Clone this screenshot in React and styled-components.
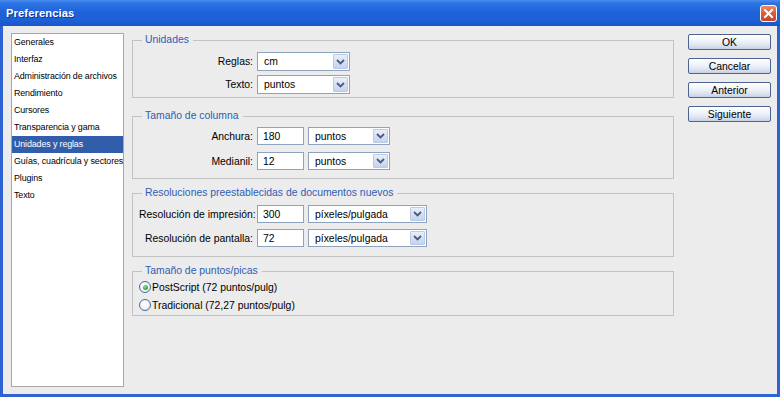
import React from 'react';
import styled, { createGlobalStyle } from 'styled-components';

const Global = createGlobalStyle`
  html, body { margin: 0; padding: 0; background: #ECECEC; }
  body { font-family: "Liberation Sans", Arial, sans-serif; color: #000; }
  * { box-sizing: border-box; }
`;

const Window = styled.div`
  width: 780px;
  height: 397px;
  display: flex;
  flex-direction: column;
  overflow: hidden;
`;

const TitleBar = styled.div`
  height: 26px;
  flex: none;
  display: flex;
  align-items: center;
  justify-content: space-between;
  padding: 0 3px 0 6px;
  background: linear-gradient(180deg, #4A8EF2 0%, #2D74E4 12%, #1F63D9 45%, #1D5FD6 80%, #1A55C6 100%);
`;

const Title = styled.span`
  font-family: "Liberation Sans", Arial, sans-serif;
  font-weight: bold;
  font-size: 11.2px;
  color: #fff;
  text-shadow: 1px 1px 0 #0C3A9A;
  letter-spacing: 0.1px;
`;

const CloseButton = styled.div`
  width: 17px;
  height: 17px;
  border: 1px solid #fff;
  border-radius: 3px;
  background: linear-gradient(180deg, #EE8A67 0%, #DF5F38 45%, #C9431F 100%);
  display: flex;
  align-items: center;
  justify-content: center;
`;

const Frame = styled.div`
  flex: 1;
  display: flex;
  align-items: stretch;
  background: #ECECEC;
  border: 3px solid #2F63D4;
  border-top: 0;
  padding: 7px 0 7px 8px;
`;

const Sidebar = styled.ul`
  list-style: none;
  margin: 0;
  padding: 0;
  width: 113px;
  flex: none;
  background: #fff;
  border: 1px solid #A8A8A8;
`;

const SideItem = styled.li`
  height: 17px;
  line-height: 17px;
  padding-left: 2px;
  font-size: 8.9px;
  letter-spacing: -0.12px;
  white-space: nowrap;
  color: ${p => (p.$active ? '#fff' : '#000')};
  background: ${p => (p.$active ? '#315DAA' : 'transparent')};
`;

const Main = styled.div`
  width: 542px;
  margin-left: 8px;
  padding-top: 1px;
  display: flex;
  flex-direction: column;
  gap: 8px;
  flex: none;
`;

const Group = styled.fieldset`
  margin: 0 0 ${p => p.$mb || 0}px 0;
  border: 1px solid #C2C2C2;
  padding: ${p => p.$pt}px 6px ${p => p.$pb}px 6px;
  display: flex;
  flex-direction: column;
  gap: ${p => p.$gap}px;
  min-inline-size: 0;
`;

const Legend = styled.legend`
  margin-left: 3px;
  padding: 0 4px 0 3px;
  line-height: 12px;
  font-size: 10.4px;
  color: #2F5CB5;
`;

const Row = styled.div`
  display: flex;
  align-items: center;
  height: ${p => p.$h}px;
`;

const Label = styled.span`
  width: 114px;
  margin-right: 4px;
  text-align: right;
  font-size: 10.4px;
  white-space: nowrap;
`;

const TextInput = styled.div`
  width: 47px;
  height: 100%;
  margin-right: 4px;
  background: #fff;
  border: 1px solid #8EA3BE;
  padding-left: 5px;
  display: flex;
  align-items: center;
  font-size: 10.4px;
`;

const Select = styled.div`
  width: ${p => p.$w}px;
  height: 100%;
  background: #fff;
  border: 1px solid #8EA3BE;
  display: flex;
  align-items: stretch;
  font-size: 10.4px;
`;

const SelectText = styled.span`
  flex: 1;
  display: flex;
  align-items: center;
  padding-left: 6px;
`;

const Arrow = styled.span`
  width: 15px;
  margin: 1px;
  border: 1px solid #B9C9E6;
  border-radius: 1px;
  background: linear-gradient(180deg, #E9EFFA 0%, #D3DEF3 60%, #C4D3EE 100%);
  display: flex;
  align-items: center;
  justify-content: center;
`;

const RadioRow = styled.div`
  display: flex;
  align-items: center;
  height: 18px;
  font-size: 10.4px;
  gap: 1px;
`;

const RadioCircle = styled.span`
  width: 12px;
  height: 12px;
  border-radius: 50%;
  border: 1px solid #3E6BA6;
  background: radial-gradient(circle at 40% 40%, #fff 0%, #F2F2EE 55%, #D8DCE2 100%);
  display: flex;
  align-items: center;
  justify-content: center;
  &::after {
    content: '';
    display: ${p => (p.$checked ? 'block' : 'none')};
    width: 5px;
    height: 5px;
    border-radius: 50%;
    background: radial-gradient(circle at 40% 35%, #8EE38E 0%, #2FAE3A 60%, #1E8C28 100%);
  }
`;

const ButtonCol = styled.div`
  margin-left: 14px;
  display: flex;
  flex-direction: column;
  gap: 8px;
  padding-top: 1px;
`;

const Button = styled.div`
  width: 83px;
  height: 16px;
  border: 1px solid #4F6391;
  border-radius: 2px;
  background: linear-gradient(180deg, #FFFFFF 0%, #F1F4FA 40%, #DCE3F0 75%, #C6D1E5 100%);
  display: flex;
  align-items: center;
  justify-content: center;
  font-size: 10.4px;
`;

const ChevronIcon = () => (
  <svg width="9" height="6" viewBox="0 0 9 6">
    <path d="M1 1 L4.5 4.5 L8 1" fill="none" stroke="#4A5B7C" strokeWidth="1.8" />
  </svg>
);

const CloseIcon = () => (
  <svg width="11" height="11" viewBox="0 0 11 11">
    <path d="M2 2 L9 9 M9 2 L2 9" stroke="#fff" strokeWidth="2" strokeLinecap="square" />
  </svg>
);

const Dropdown = ({ w, value }) => (
  <Select $w={w}>
    <SelectText>{value}</SelectText>
    <Arrow><ChevronIcon /></Arrow>
  </Select>
);

const items = [
  'Generales',
  'Interfaz',
  'Administración de archivos',
  'Rendimiento',
  'Cursores',
  'Transparencia y gama',
  'Unidades y reglas',
  'Guías, cuadrícula y sectores',
  'Plugins',
  'Texto',
];

export default function App() {
  return (
    <>
      <Global />
      <Window>
        <TitleBar>
          <Title>Preferencias</Title>
          <CloseButton><CloseIcon /></CloseButton>
        </TitleBar>
        <Frame>
          <Sidebar>
            {items.map(it => (
              <SideItem key={it} $active={it === 'Unidades y reglas'}>{it}</SideItem>
            ))}
          </Sidebar>
          <Main>
            <Group $pt={6} $pb={3} $gap={4} $mb={4}>
              <Legend>Unidades</Legend>
              <Row $h={19}>
                <Label>Reglas:</Label>
                <Dropdown w={93} value="cm" />
              </Row>
              <Row $h={19}>
                <Label>Texto:</Label>
                <Dropdown w={93} value="puntos" />
              </Row>
            </Group>
            <Group $pt={5} $pb={8} $gap={7}>
              <Legend>Tamaño de columna</Legend>
              <Row $h={18}>
                <Label>Anchura:</Label>
                <TextInput>180</TextInput>
                <Dropdown w={82} value="puntos" />
              </Row>
              <Row $h={18}>
                <Label>Medianil:</Label>
                <TextInput>12</TextInput>
                <Dropdown w={82} value="puntos" />
              </Row>
            </Group>
            <Group $pt={6} $pb={9} $gap={6}>
              <Legend>Resoluciones preestablecidas de documentos nuevos</Legend>
              <Row $h={18}>
                <Label>Resolución de impresión:</Label>
                <TextInput>300</TextInput>
                <Dropdown w={119} value="píxeles/pulgada" />
              </Row>
              <Row $h={18}>
                <Label>Resolución de pantalla:</Label>
                <TextInput>72</TextInput>
                <Dropdown w={119} value="píxeles/pulgada" />
              </Row>
            </Group>
            <Group $pt={1} $pb={1} $gap={0}>
              <Legend>Tamaño de puntos/picas</Legend>
              <RadioRow>
                <RadioCircle $checked />
                <span>PostScript (72 puntos/pulg)</span>
              </RadioRow>
              <RadioRow>
                <RadioCircle />
                <span>Tradicional (72,27 puntos/pulg)</span>
              </RadioRow>
            </Group>
          </Main>
          <ButtonCol>
            <Button>OK</Button>
            <Button>Cancelar</Button>
            <Button>Anterior</Button>
            <Button>Siguiente</Button>
          </ButtonCol>
        </Frame>
      </Window>
    </>
  );
}
